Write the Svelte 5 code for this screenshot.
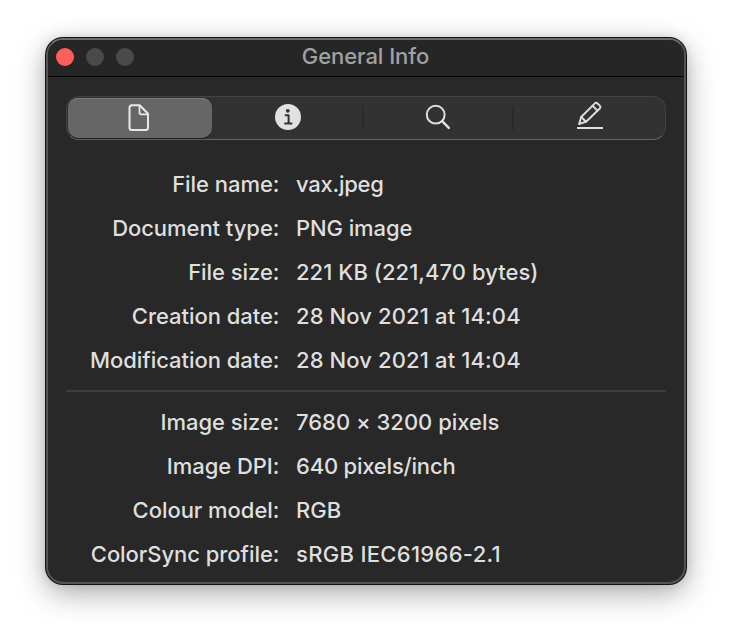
<script>
  // label, value, value letter-spacing in px
  const fileRows = [
    ['File name:', 'vax.jpeg', -0.25],
    ['Document type:', 'PNG image', -0.1],
    ['File size:', '221 KB (221,470 bytes)', 0.04],
    ['Creation date:', '28 Nov 2021 at 14:04', 0.12],
    ['Modification date:', '28 Nov 2021 at 14:04', 0.12]
  ];
  const imageRows = [
    ['Image size:', '7680 × 3200 pixels', 0],
    ['Image DPI:', '640 pixels/inch', -0.2],
    ['Colour model:', 'RGB', 0],
    ['ColorSync profile:', 'sRGB IEC61966-2.1', 0.31]
  ];
</script>

{#snippet rows(list)}
  <dl>
    {#each list as [label, value, tracking]}
      <div class="row">
        <dt>{label}</dt>
        <dd class:plain={value.includes('×')} style:letter-spacing="{tracking}px">{value}</dd>
      </div>
    {/each}
  </dl>
{/snippet}

<div class="desktop">
  <section class="window">
    <header>
      <div class="lights"><i class="close"></i><i></i><i></i></div>
      <h1>General Info</h1>
    </header>
    <nav>
      <button class="selected" aria-label="General">
        <svg width="26" height="30" viewBox="0 0 26 30" fill="none" stroke="#e9e9e9" stroke-width="2" stroke-linejoin="round">
          <path d="M5 2.3H12.7L21 10.7V24.5Q21 27 18.5 27H5Q2.5 27 2.5 24.5V4.8Q2.5 2.3 5 2.3Z" />
          <path d="M12.5 2.5V9.5Q12.5 11.3 14.3 11.3H20.7" stroke-width="1.7" />
        </svg>
      </button>
      <button aria-label="Info">
        <svg width="26" height="26" viewBox="0 0 26 26">
          <circle cx="13" cy="13" r="13" fill="#e1e1e1" />
          <circle cx="12.8" cy="6.8" r="1.9" fill="#323232" />
          <path d="M10.6 11.3H13.6V19M10.1 19.4H16.5" fill="none" stroke="#323232" stroke-width="2" stroke-linecap="round" stroke-linejoin="round" />
        </svg>
      </button>
      <button class="divided" aria-label="Inspect">
        <svg class="lens" width="26" height="26" viewBox="0 0 26 26" fill="none" stroke="#dfdfdf">
          <circle cx="10.7" cy="10.7" r="8.9" stroke-width="2" />
          <path d="M17.2 17.2L23.8 23.8" stroke-width="2.6" stroke-linecap="round" />
        </svg>
      </button>
      <button class="divided" aria-label="Annotations">
        <svg class="pencil" width="28" height="30" viewBox="0 0 28 30" fill="none" stroke="#dfdfdf" stroke-width="1.9" stroke-linejoin="round" stroke-linecap="round">
          <path d="M3.1 24L5.2 17L18.9 3.3Q20.1 2.2 21.3 3.3L24 5.9Q25 7 24 8.2L10.1 21.7Z" />
          <path d="M5.2 17L10.1 21.7M16.5 5.8L21.5 10.6" />
          <path d="M2 28H26" stroke-width="2" stroke-linecap="square" />
        </svg>
      </button>
    </nav>
    {@render rows(fileRows)}
    <hr />
    {@render rows(imageRows)}
  </section>
</div>

<style>
  :global(body) { background: #fff; }
  .desktop {
    box-sizing: border-box;
    width: 732px;
    height: 638px;
    padding: 38px 46px 0;
    overflow: hidden;
    font-family: Inter, "Liberation Sans", sans-serif;
  }
  .window {
    box-sizing: border-box;
    width: 640px;
    height: 546px;
    border: 2px solid #545556;
    border-top-color: #6b6c6d;
    border-radius: 17px;
    background: #282828;
    box-shadow: 0 0 0 1px #101112, 0 9px 30px rgba(0, 0, 0, 0.34), 0 0 12px rgba(0, 0, 0, 0.12);
    overflow: hidden;
  }
  header {
    box-sizing: border-box;
    height: 37px;
    display: grid;
    grid-template-columns: 110px 1fr 110px;
    align-items: start;
    border-bottom: 1px solid #000;
    background: #262626;
  }
  .lights { display: flex; gap: 12px; padding: 8px 0 0 8px; }
  .lights i { width: 18px; height: 18px; border-radius: 50%; background: #4a4a4a; }
  .lights .close { background: #ff5f5b; }
  h1 {
    margin: 0;
    padding-right: 1px;
    text-align: center;
    color: #a1a1a1;
    font-size: 22px;
    font-weight: 450;
    letter-spacing: -0.05px;
    line-height: 32px;
  }
  nav {
    box-sizing: border-box;
    display: grid;
    grid-template-columns: 145px 149px 150px 1fr;
    width: 600px;
    height: 44px;
    margin: 19px 0 0 18px;
    padding: 1px;
    border: 1px solid #424242;
    border-bottom-color: #656565;
    border-radius: 13px;
    background: #323232;
  }
  button {
    position: relative;
    display: flex;
    align-items: center;
    justify-content: center;
    height: 38px;
    padding: 0;
    border: 0;
    background: none;
  }
  .selected {
    width: 144px;
    height: 40px;
    border-radius: 10px;
    background: #666;
    box-shadow: inset 0 1px #7c7c7c, 0 1px 1px rgba(0, 0, 0, 0.45);
  }
  .divided::before {
    content: "";
    position: absolute;
    left: 0;
    top: 8px;
    width: 2px;
    height: 24px;
    background: #2a2a2a;
  }
  .lens { margin-left: 2px; }
  .pencil { margin: 0 0 4px 3px; }
  dl { margin: 0; }
  nav + dl { margin-top: 22px; }
  .row {
    display: grid;
    grid-template-columns: 231.4px 1fr;
    column-gap: 16.6px;
    height: 44px;
    align-items: center;
    color: #dfdfdf;
    font-size: 22px;
    font-weight: 500;
    line-height: 44px;
    white-space: nowrap;
  }
  dt {
    text-align: right;
    letter-spacing: -0.05px;
    font-feature-settings: "calt" 0;
  }
  dd { margin: 0; }
  .plain { font-feature-settings: "calt" 0; }
  hr { height: 2px; margin: 8px 18px; border: 0; background: #3d3d3d; }
</style>
